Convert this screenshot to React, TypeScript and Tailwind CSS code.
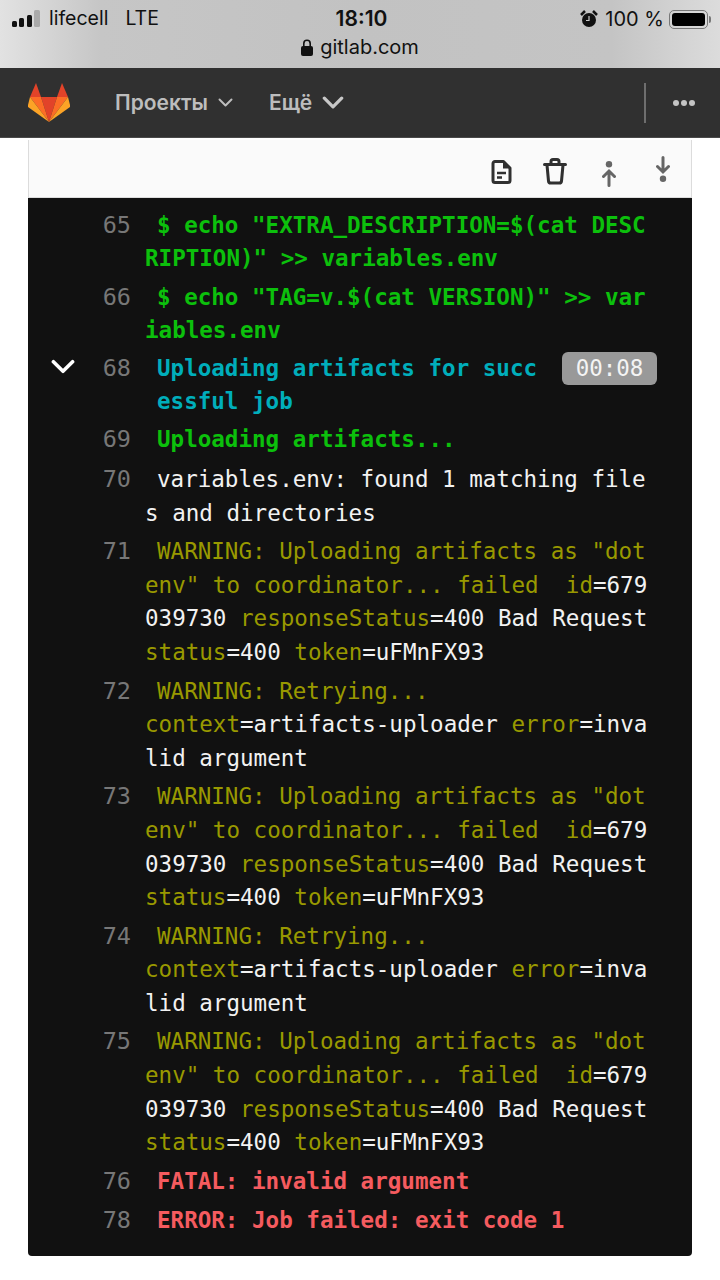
const G = "text-[#0cc00c] font-bold";
const C = "text-[#00aebb] font-bold";
const Y = "text-[#999900]";
const R = "text-[#f55b5f] font-bold";
const W = "text-[#f2f2f2]";

type Seg = [string, string];

interface LogRow {
  num: number;
  segs: Seg[];
  extra?: string;
}

const UPLOAD_WARN: Seg[] = [
  [Y, 'WARNING: Uploading artifacts as "dotenv" to coordinator... failed  id'],
  [W, "=679039730 "],
  [Y, "responseStatus"],
  [W, "=400 Bad Request "],
  [Y, "status"],
  [W, "=400 "],
  [Y, "token"],
  [W, "=uFMnFX93"],
];

const RETRY_WARN: Seg[] = [
  [Y, "WARNING: Retrying...\ncontext"],
  [W, "=artifacts-uploader "],
  [Y, "error"],
  [W, "=invalid argument"],
];

const BEFORE: LogRow[] = [
  { num: 65, segs: [[G, '$ echo "EXTRA_DESCRIPTION=$(cat DESCRIPTION)" >> variables.env']] },
  { num: 66, segs: [[G, '$ echo "TAG=v.$(cat VERSION)" >> variables.env']] },
];

const AFTER: LogRow[] = [
  { num: 69, segs: [[G, "Uploading artifacts..."]], extra: "mb-[1.5px]" },
  { num: 70, segs: [[W, "variables.env: found 1 matching files and directories"]] },
  { num: 71, segs: UPLOAD_WARN },
  { num: 72, segs: RETRY_WARN },
  { num: 73, segs: UPLOAD_WARN },
  { num: 74, segs: RETRY_WARN },
  { num: 75, segs: UPLOAD_WARN },
  { num: 76, segs: [[R, "FATAL: invalid argument"]], extra: "mb-[1px]" },
  { num: 78, segs: [[R, "ERROR: Job failed: exit code 1"]] },
];

function Row({ row }: { row: LogRow }) {
  return (
    <div className={`flex ${row.extra ?? ""}`}>
      <span className="w-[103px] shrink-0 text-right text-[23.5px] text-[#777777]">{row.num}</span>
      <p className="ml-[14px] w-[506px] indent-[12px] whitespace-pre-wrap break-all">
        {row.segs.map((s, i) => (
          <span key={i} className={s[0]}>
            {s[1]}
          </span>
        ))}
      </p>
    </div>
  );
}

function Tanuki() {
  return (
    <svg width="42" height="39" viewBox="0 0 42 39">
      <polygon points="21,39 29,14 13,14" fill="#e24329" />
      <polygon points="21,39 13,14 2,14" fill="#fc6d26" />
      <polygon points="2,14 0,22 0,24 21,39" fill="#fca326" />
      <polygon points="2,14 13,14 8,0" fill="#e24329" />
      <polygon points="21,39 29,14 40,14" fill="#fc6d26" />
      <polygon points="40,14 42,22 42,24 21,39" fill="#fca326" />
      <polygon points="40,14 29,14 34,0" fill="#e24329" />
    </svg>
  );
}

function Chevron({ w, h, sw, color }: { w: number; h: number; sw: number; color: string }) {
  return (
    <svg width={w} height={h} viewBox="0 0 20 12" fill="none">
      <path d="M2 2l8 8 8-8" stroke={color} strokeWidth={sw} strokeLinecap="round" strokeLinejoin="round" />
    </svg>
  );
}

function StatusBar() {
  return (
    <div className="h-[68px] bg-[linear-gradient(90deg,#e2e2e2_0%,#c6c6c6_14%,#c2c2c2_50%,#c4c4c4_85%,#dcdcdc_100%)] text-[#111111] flex flex-col">
      <div className="flex items-center justify-between pl-[12px] pr-[9px] h-[38px]">
        <div className="flex w-[240px] items-center text-[19.5px]">
          <svg width="29" height="18" viewBox="0 0 29 18">
            <rect x="0" y="11" width="5" height="6" rx="1.5" fill="#111" />
            <rect x="7" y="8" width="5" height="9" rx="1.5" fill="#111" />
            <rect x="15" y="5" width="5" height="12" rx="1.5" fill="#111" />
            <rect x="22" y="0" width="6" height="17" rx="1.5" fill="#aaa" />
          </svg>
          <span className="ml-[8px]">lifecell</span>
          <span className="ml-[17px]">LTE</span>
        </div>
        <span className="text-[21px] font-semibold">18:10</span>
        <div className="flex w-[240px] items-center justify-end">
          <svg width="18" height="18" viewBox="0 0 18 18">
            <circle cx="9" cy="10" r="7" fill="#111" />
            <path d="M9 6v4.5H6" stroke="#ccc" strokeWidth="1.2" fill="none" />
            <path d="M1 5l4-4M17 5l-4-4" stroke="#111" strokeWidth="2.5" />
          </svg>
          <span className="ml-[7px] text-[20px]">100 %</span>
          <div className="ml-[5px] flex items-center">
            <div className="flex h-[19px] w-[39px] rounded-[5px] border border-[#777777] p-[2px]">
              <div className="flex-1 rounded-[3px] bg-[#000000]" />
            </div>
            <div className="ml-[1px] h-[7px] w-[2px] rounded-r-sm bg-[#777777]" />
          </div>
        </div>
      </div>
      <div className="flex items-center justify-center text-[20px] leading-[24px] gap-[7px] mt-[-3px]">
        <svg width="12" height="17" viewBox="0 0 12 17">
          <rect x="0" y="7" width="12" height="10" rx="2" fill="#111" />
          <path d="M2.8 8V4.5a3.2 3.2 0 016.4 0V8" stroke="#111" strokeWidth="1.6" fill="none" />
        </svg>
        <span>gitlab.com</span>
      </div>
    </div>
  );
}

function NavBar() {
  return (
    <div className="flex h-[70px] items-center bg-[#303030] border-b border-[#4a4a4a] pl-[28px] pr-[25px]">
      <Tanuki />
      <span className="ml-[45px] text-[21px] font-semibold text-[#bdbdbd]">Проекты</span>
      <span className="ml-[10px]">
        <Chevron w={15} h={9} sw={2.6} color="#bdbdbd" />
      </span>
      <span className="ml-[36px] text-[21px] font-semibold text-[#bdbdbd]">Ещё</span>
      <span className="ml-[10px]">
        <Chevron w={22} h={13} sw={3} color="#c8c8c8" />
      </span>
      <div className="ml-auto h-[40px] w-[2px] bg-[#6e6e6e]" />
      <div className="ml-[27px] flex gap-[2px]">
        <div className="h-[6px] w-[6px] rounded-full bg-[#c4c4c4]" />
        <div className="h-[6px] w-[6px] rounded-full bg-[#c4c4c4]" />
        <div className="h-[6px] w-[6px] rounded-full bg-[#c4c4c4]" />
      </div>
    </div>
  );
}

function Toolbar() {
  return (
    <div className="flex h-[58px] items-center justify-end border-x border-b border-[#dcdcdc] bg-[#fafafa] pr-[21px]">
      <svg className="mr-[31px] mt-[6px]" width="21" height="24" viewBox="0 0 21 24" fill="none">
        <path d="M2 3.5a2 2 0 012-2h8.5l6.5 6.5v12.5a2 2 0 01-2 2H4a2 2 0 01-2-2z" stroke="#303030" strokeWidth="3" strokeLinejoin="round" />
        <path d="M12 2v6.5h6.5z" fill="#303030" />
        <path d="M6 13h9M6 17.5h5" stroke="#303030" strokeWidth="2.6" />
      </svg>
      <svg className="mr-[35px] mt-[5px]" width="24" height="27" viewBox="0 0 24 27" fill="none">
        <path d="M1.5 6.5h21M8 6V3.5a2 2 0 012-2h4a2 2 0 012 2V6" stroke="#303030" strokeWidth="3" strokeLinecap="round" />
        <path d="M4 7l1.5 16a2.2 2.2 0 002.2 2h8.6a2.2 2.2 0 002.2-2L20 7" stroke="#303030" strokeWidth="3" />
      </svg>
      <svg className="mr-[40px] mt-[10px]" width="14" height="26" viewBox="0 0 14 26" fill="none">
        <circle cx="7" cy="3.2" r="3.2" fill="#666666" />
        <path d="M7 24.5V11M1.5 15.5L7 10l5.5 5.5" stroke="#666666" strokeWidth="3" strokeLinecap="round" />
      </svg>
      <svg width="14" height="26" viewBox="0 0 14 26" fill="none">
        <path d="M7 1.5V15M1.5 10.5L7 16l5.5-5.5" stroke="#666666" strokeWidth="3" strokeLinecap="round" />
        <circle cx="7" cy="22.8" r="3.2" fill="#666666" />
      </svg>
    </div>
  );
}

export default function App() {
  return (
    <div className="min-h-[1280px] w-[720px] overflow-hidden bg-white font-['Inter',sans-serif]">
      <StatusBar />
      <NavBar />
      <div className="mx-[28px] mt-[2px]">
        <Toolbar />
        <div className="flex flex-col gap-[5px] rounded-b bg-[#111111] pt-[10.5px] pb-[17.5px] font-['DejaVu_Sans_Mono',monospace] text-[22.55px] leading-[33.6px]">
          {BEFORE.map((r) => (
            <Row key={r.num} row={r} />
          ))}
          <div className="flex mt-[-1px] leading-[33px]">
            <span className="flex w-[103px] shrink-0 justify-between text-[23.5px] text-[#777777]">
              <span className="ml-[23px] mt-[7px]">
                <Chevron w={24} h={15} sw={3} color="#ffffff" />
              </span>
              <span>68</span>
            </span>
            <p className={`ml-[26px] w-[382px] shrink-0 break-all ${C}`}>Uploading artifacts for successful job</p>
            <span className="ml-[23px] h-[33px] w-[95px] rounded-[6px] bg-[#999999] text-center text-[22.5px] leading-[33px] text-[#f4f4f4]">
              00:08
            </span>
          </div>
          {AFTER.map((r) => (
            <Row key={r.num} row={r} />
          ))}
        </div>
      </div>
    </div>
  );
}
